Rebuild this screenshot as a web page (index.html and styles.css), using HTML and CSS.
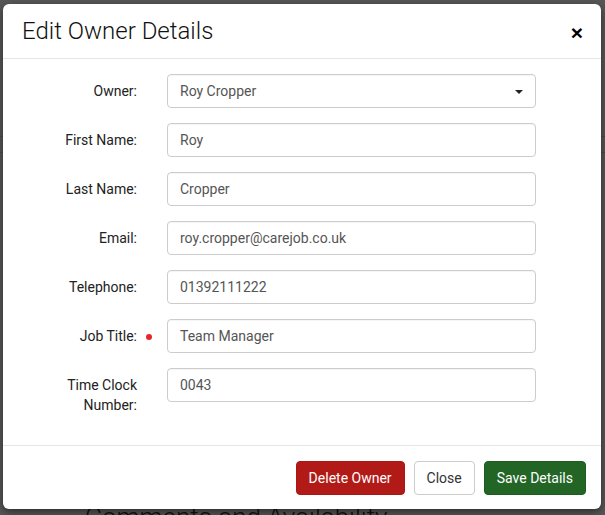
FILE: index.html
```html
<!DOCTYPE html>
<html lang="en">
<head>
<meta charset="utf-8">
<title>Edit Owner Details</title>
<link rel="stylesheet" href="styles.css">
</head>
<body>
<div class="page">
  <div class="page-bar"></div>
  <div class="page-bar2"></div>
  <h2 class="page-heading">Comments and Availability</h2>
</div>
<div class="backdrop"></div>
<div class="modal">
  <div class="modal-header">
    <h4 class="modal-title">Edit Owner Details</h4>
    <button class="close" type="button">&times;</button>
  </div>
  <div class="modal-body">
    <div class="form-row">
      <label class="form-label">Owner:</label>
      <div class="form-control select">Roy Cropper<span class="caret"></span></div>
    </div>
    <div class="form-row">
      <label class="form-label">First Name:</label>
      <div class="form-control">Roy</div>
    </div>
    <div class="form-row">
      <label class="form-label">Last Name:</label>
      <div class="form-control">Cropper</div>
    </div>
    <div class="form-row">
      <label class="form-label">Email:</label>
      <div class="form-control">roy.cropper@carejob.co.uk</div>
    </div>
    <div class="form-row">
      <label class="form-label">Telephone:</label>
      <div class="form-control">01392111222</div>
    </div>
    <div class="form-row">
      <label class="form-label required">Job Title:</label>
      <div class="form-control">Team Manager</div>
    </div>
    <div class="form-row">
      <label class="form-label">Time Clock<br>Number:</label>
      <div class="form-control">0043</div>
    </div>
  </div>
  <div class="modal-footer">
    <button class="btn btn-danger" type="button">Delete Owner</button>
    <button class="btn btn-default" type="button">Close</button>
    <button class="btn btn-success" type="button">Save Details</button>
  </div>
</div>
</body>
</html>
```
FILE: styles.css
```css
html, body {
  margin: 0;
  padding: 0;
}
body {
  width: 605px;
  height: 515px;
  overflow: hidden;
  position: relative;
  font-family: Roboto, "Liberation Sans", Arial, sans-serif;
  font-size: 14px;
  color: #333;
  background: #fff;
}
.page {
  height: 515px;
}
.page-bar {
  height: 136px;
  border-bottom: 1px solid #ddd;
}
.page-bar2 {
  height: 15px;
  border-bottom: 1px solid #ddd;
}
.page-heading {
  margin: 0;
  padding: 349px 0 0 85px;
  font-size: 26px;
  font-weight: 300;
  color: #333;
  line-height: 30px;
}
.backdrop {
  position: absolute;
  inset: 0;
  background: rgba(0, 0, 0, 0.66);
}
.modal {
  position: absolute;
  left: 3px;
  top: 4px;
  width: 598px;
  height: 505px;
  background: #fff;
  border-radius: 6px;
  box-shadow: 0 3px 9px rgba(0, 0, 0, 0.5);
  display: flex;
  flex-direction: column;
  overflow: hidden;
}
.modal-header {
  height: 55px;
  box-sizing: border-box;
  padding: 0 18px 0 19px;
  border-bottom: 1px solid #e5e5e5;
  display: flex;
  align-items: center;
  justify-content: space-between;
}
.modal-title {
  margin: 0;
  font-size: 24px;
  font-weight: 300;
  color: #111;
  line-height: 28px;
}
.close {
  border: 0;
  background: none;
  padding: 0;
  font-family: "Liberation Sans", Arial, sans-serif;
  font-size: 21px;
  font-weight: 700;
  line-height: 1;
  color: #000;
  margin-top: 2px;
}
.modal-body {
  padding: 15px 15px 0 15px;
  flex: 1;
  border-bottom: 1px solid #e5e5e5;
}
.form-row {
  display: grid;
  grid-template-columns: 149px 369px;
  margin-bottom: 15px;
}
.form-label {
  position: relative;
  text-align: right;
  padding: 7px 30px 0 0;
  line-height: 20px;
  color: #222;
}
.form-label.required::after {
  content: "";
  position: absolute;
  right: 15px;
  top: 15px;
  width: 6px;
  height: 6px;
  border-radius: 50%;
  background: #e8262a;
}
.form-control {
  position: relative;
  height: 34px;
  box-sizing: border-box;
  padding: 6px 12px;
  line-height: 20px;
  border: 1px solid #ccc;
  border-radius: 4px;
  color: #555;
  background: #fff;
  box-shadow: inset 0 1px 1px rgba(0, 0, 0, 0.04);
}
.caret {
  position: absolute;
  right: 12px;
  top: 15px;
  width: 0;
  height: 0;
  border-left: 4px solid transparent;
  border-right: 4px solid transparent;
  border-top: 4px solid #222;
}
.modal-footer {
  height: 63px;
  box-sizing: border-box;
  padding: 15px;
  display: flex;
  justify-content: flex-end;
  gap: 9px;
}
.btn {
  font-family: Roboto, "Liberation Sans", Arial, sans-serif;
  font-size: 14px;
  height: 34px;
  padding: 6px 12px;
  line-height: 20px;
  border-radius: 4px;
  border: 1px solid transparent;
}
.btn-danger {
  background: #b21a17;
  color: #fff;
  border-color: #a81714;
}
.btn-default {
  background: #fff;
  color: #333;
  border-color: #ccc;
}
.btn-success {
  background: #226525;
  color: #fff;
  border-color: #1e5c21;
}
```
